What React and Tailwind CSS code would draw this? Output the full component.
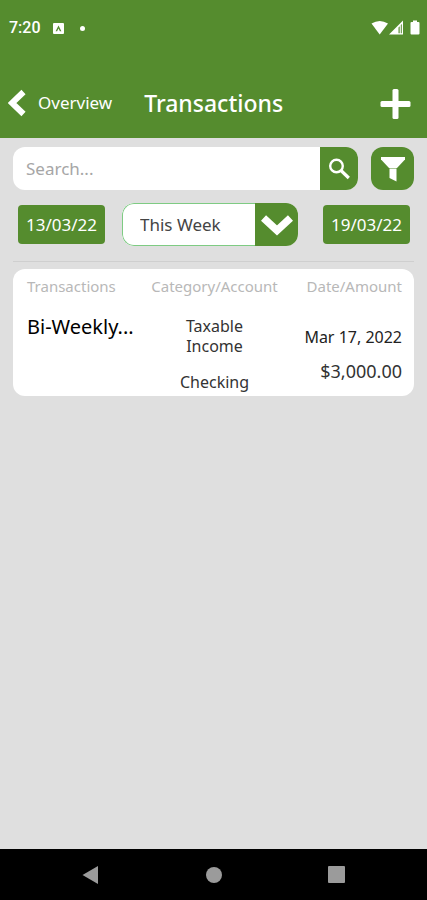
function StatusBar() {
  return (
    <div className="flex h-14 items-center justify-between pl-[9px] pr-1.5 font-['Roboto',sans-serif]">
      <div className="flex items-center">
        <span className="w-11 text-base font-medium">7:20</span>
        <svg className="h-[11px] w-[11px]" viewBox="0 0 11 11" aria-hidden="true">
          <rect width="11" height="11" rx="1" fill="white" />
          <path d="M2.600 8.200 5.500 2.600l2.900 5.600H6.900L5.500 5.600 4.100 8.200Z" fill="#558b2f" />
        </svg>
        <span className="ml-4 h-[5px] w-[5px] rounded-full bg-white" />
      </div>
      <svg className="h-4 w-[50px]" viewBox="0 0 50 16" fill="white" aria-hidden="true">
        <path d="M0.500 3.600Q8.700 -1.600 17 3.600L8.700 14.500Z" />
        <path d="M18 14.500 32 0.500V14.500ZM27.500 7.500V13.200H28.700V6.200ZM29.800 5V13.200H30.800V4Z" fillRule="evenodd" />
        <path d="M42 0.500h4v1.500h1.500q1 0 1 1v10.500q0 1-1 1h-7q-1 0-1-1V3q0-1 1-1H42Z" />
      </svg>
    </div>
  );
}

function Header() {
  return (
    <header className="h-[138px] bg-[#558c2e] text-white">
      <StatusBar />
      <div className="flex h-[94px] items-center pl-2 pr-4">
        <button type="button" className="flex items-center text-[17px]">
          <svg className="mr-3 h-7 w-[18px]" viewBox="0 0 18 28" aria-hidden="true">
            <path d="M15.500 3 4 14l11.500 11" fill="none" stroke="white" strokeWidth="6" />
          </svg>
          Overview
        </button>
        <h1 className="ml-8 flex-1 text-[23px] font-medium">Transactions</h1>
        <button type="button" aria-label="Add transaction">
          <svg className="h-[31px] w-[31px]" viewBox="0 0 31 31" fill="white" aria-hidden="true">
            <rect x="12.500" y="1" width="6" height="30" rx="1.500" />
            <rect x="0.500" y="13" width="30" height="6" rx="1.500" />
          </svg>
        </button>
      </div>
    </header>
  );
}

function Filters() {
  return (
    <div className="border-b border-[#cfcfcf] pb-[15px]">
      <form className="flex h-[43px] gap-[13px]" onSubmit={(e) => e.preventDefault()}>
        <div className="flex flex-1 overflow-hidden rounded-xl bg-white">
          <input
            type="text"
            aria-label="Search"
            placeholder="Search..."
            className="min-w-0 flex-1 px-[13px] text-[17px] outline-none placeholder:text-[#a6a6a6]"
          />
          <button type="submit" aria-label="Search" className="flex w-[38px] items-center justify-center bg-[#558c2e]">
            <svg className="h-[22px] w-[22px]" viewBox="0 0 22 22" fill="none" stroke="white" aria-hidden="true">
              <circle cx="8.500" cy="8" r="6.300" strokeWidth="2.400" />
              <path d="m13 12.500 7.800 7.500" strokeWidth="3.200" />
            </svg>
          </button>
        </div>
        <button type="button" aria-label="Filter" className="flex w-[43px] items-center justify-center rounded-xl bg-[#558c2e]">
          <svg className="h-[26px] w-[26px]" viewBox="0 0 26 26" aria-hidden="true">
            <path d="M1 1h24v2.500L17 12H9L1 3.500Z" fill="white" />
            <path d="M9.500 12.500h7V25.500L9.500 22Z" fill="white" />
          </svg>
        </button>
      </form>
      <div className="mt-[13px] flex items-center justify-between pl-[5px] pr-1">
        <button type="button" className="h-[39px] w-[87px] rounded-sm bg-[#558c2e] text-[17px] text-white">13/03/22</button>
        <label className="-ml-2 flex h-[43px] w-[176px] overflow-hidden rounded-xl bg-white">
          <select
            aria-label="Period"
            className="min-w-0 flex-1 appearance-none rounded-l-xl border border-r-0 border-[#7ecb83] pl-[17px] text-[17px] text-[#444] outline-none"
          >
            <option>This Week</option>
          </select>
          <span className="flex w-[43px] items-center justify-center bg-[#558c2e]">
            <svg className="h-[22px] w-8" viewBox="0 0 32 22" aria-hidden="true">
              <path d="m2.500 4 13.500 12.500L29.500 4" fill="none" stroke="white" strokeWidth="7.500" />
            </svg>
          </span>
        </label>
        <button type="button" className="h-[39px] w-[87px] rounded-sm bg-[#558c2e] text-[17px] text-white">19/03/22</button>
      </div>
    </div>
  );
}

function TransactionTable() {
  return (
    <section className="mt-[7px] rounded-xl bg-white pb-1 pl-[14px] pr-3">
      <table className="w-full table-fixed border-collapse text-base leading-5 text-[#333]">
        <thead>
          <tr className="h-[34px] whitespace-nowrap text-[15px] text-[#b8b8b8]">
            <th className="p-0 text-left font-normal">Transactions</th>
            <th className="w-[128px] p-0 text-center font-normal">Category/Account</th>
            <th className="p-0 text-right font-normal">Date/Amount</th>
          </tr>
        </thead>
        <tbody>
          <tr className="align-top">
            <td className="p-0 pt-[14px] text-xl leading-5 text-black">Bi-Weekly...</td>
            <td className="p-0 pt-[13px] text-center">
              <p className="px-6">Taxable Income</p>
              <p className="mt-4">Checking</p>
            </td>
            <td className="p-0 pt-6 text-right">
              <p className="text-[#222]">Mar 17, 2022</p>
              <p className="mt-[14px] text-lg leading-5">$3,000.00</p>
            </td>
          </tr>
        </tbody>
      </table>
    </section>
  );
}

function NavigationBar() {
  return (
    <nav className="flex h-[51px] items-center justify-around bg-black px-[29px]">
      <button type="button" aria-label="Back">
        <svg className="h-5 w-[18px]" viewBox="0 0 18 20" aria-hidden="true">
          <path d="M0.500 10 16 1v18Z" fill="#9b9b9b" />
        </svg>
      </button>
      <button type="button" aria-label="Home" className="h-4 w-4 rounded-full bg-[#9b9b9b]" />
      <button type="button" aria-label="Recent apps" className="h-[17px] w-[17px] rounded-[1px] bg-[#9b9b9b]" />
    </nav>
  );
}

export default function App() {
  return (
    <div className="flex min-h-screen flex-col bg-[#dfdfdf] font-['Noto_Sans',sans-serif]">
      <Header />
      <main className="flex-1 px-[13px] pt-[9px]">
        <Filters />
        <TransactionTable />
      </main>
      <NavigationBar />
    </div>
  );
}
